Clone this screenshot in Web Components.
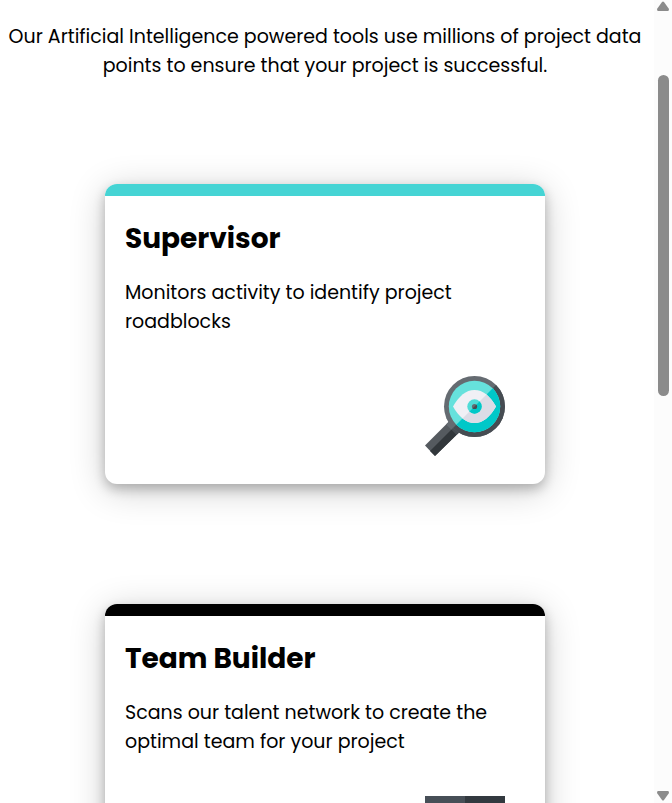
<!DOCTYPE html>
<html lang="en">
<head>
<meta charset="utf-8">
<meta name="viewport" content="width=device-width, initial-scale=1">
<title>Project tools</title>
<style>
  html, body { margin: 0; height: 100%; }
  body { background: #fff; color: #000; font-family: Poppins, Inter, "Noto Sans", sans-serif; font-size: 19px; line-height: 29px; font-weight: 400; }
</style>
</head>
<body>
<page-view>
  <page-intro>Our Artificial Intelligence powered tools use millions of project data points to ensure that your project is successful.</page-intro>
  <tool-card style="--accent: #45d4d4">
    <span slot="title">Supervisor</span>
    Monitors activity to identify project roadblocks
    <magnifier-icon slot="icon"></magnifier-icon>
  </tool-card>
  <tool-card style="--accent: #000">
    <span slot="title">Team Builder</span>
    Scans our talent network to create the optimal team for your project
    <team-icon slot="icon"></team-icon>
  </tool-card>
</page-view>
<script>
  function define(name, html) {
    const template = document.createElement('template');
    template.innerHTML = html;
    customElements.define(name, class extends HTMLElement {
      constructor() {
        super();
        this.attachShadow({ mode: 'open' }).append(template.content.cloneNode(true));
      }
    });
  }

  define('page-view', `
    <style>
      :host { display: grid; grid-template-columns: minmax(0, 1fr) 22px; height: 100vh; overflow: hidden; }
      main { display: flex; flex-direction: column; align-items: center; min-height: 0; overflow: hidden; }
    </style>
    <main><slot></slot></main>
    <scroll-rail></scroll-rail>`);

  define('scroll-rail', `
    <style>
      :host { display: flex; flex-direction: column; align-items: center; box-sizing: border-box; margin-left: 4px; padding: 1px 0 2px; background: #fcfcfc; }
      svg { display: block; width: 12px; height: 10px; flex: none; fill: #8b8b8b; }
      .track { flex: 1; width: 11px; display: flex; flex-direction: column; }
      .before { flex: 64; }
      .thumb { flex: 321; border-radius: 6px; background: #8b8b8b; }
      .after { flex: 394; }
    </style>
    <svg viewBox="0 0 12 10"><path d="M5 1Q6 0 7 1L12 8Q12 10 11 10H1Q0 10 0 8Z"/></svg>
    <div class="track"><div class="before"></div><div class="thumb"></div><div class="after"></div></div>
    <svg viewBox="0 0 12 10"><path d="M5 9Q6 10 7 9L12 2Q12 0 11 0H1Q0 0 0 2Z"/></svg>`);

  define('page-intro', `
    <style>
      :host { display: block; flex: none; padding: 22px 8px 44px; text-align: center; }
      p { margin: 0; }
    </style>
    <p><slot></slot></p>`);

  define('tool-card', `
    <style>
      :host { display: block; flex: none; box-sizing: border-box; width: calc(100% - 40px); max-width: 440px; margin: 60px 0; border-radius: 12px; background: #fff; box-shadow: 0 5px 12px rgba(0,0,0,.24), 0 6px 36px rgba(0,0,0,.2); }
      article { display: flex; flex-direction: column; border-radius: 12px; overflow: hidden; }
      .bar { height: 12px; background: var(--accent); }
      .body { display: flex; flex-direction: column; padding: 21px 20px 28px; }
      h2 { margin: 0 0 17px; font-size: 28px; line-height: 44px; font-weight: 700; }
      p { margin: 0; }
      .icon { align-self: flex-end; margin: 40px 20px 0 0; }
    </style>
    <article>
      <div class="bar"></div>
      <div class="body">
        <h2><slot name="title"></slot></h2>
        <p><slot></slot></p>
        <div class="icon"><slot name="icon"></slot></div>
      </div>
    </article>`);

  define('magnifier-icon', `
    <style>:host, svg { display: block; width: 80px; height: 80px; }</style>
    <svg viewBox="0 0 80 80" aria-hidden="true">
      <defs><clipPath id="lower"><path d="M0 80L80 0V80Z"/></clipPath></defs>
      <path d="M0 69.500L24 45.500 34.500 56 10 80Z" fill="#555a5f"/>
      <path d="M5 75L29 51 34.500 56 10 80Z" fill="#32373b"/>
      <path d="M21 48.500L26 43.500 31.300 48.700 26.500 53.700Z" fill="#656b71"/>
      <path d="M26.500 53.700L31.300 48.700 36.500 54 31.500 59Z" fill="#464c52"/>
      <circle cx="49.500" cy="30.500" r="30.500" fill="#656b71"/>
      <circle cx="49.500" cy="30.500" r="30.500" fill="#464c52" clip-path="url(#lower)"/>
      <circle cx="49.500" cy="30.500" r="25.700" fill="#66e1dc"/>
      <circle cx="49.500" cy="30.500" r="25.700" fill="#00c8c8" clip-path="url(#lower)"/>
      <path d="M28 30.500C34 20 41 14 49.500 14S65 20 71 30.500C65 41 58 47 49.500 47S34 41 28 30.500Z" fill="#f0f0f5"/>
      <path d="M28 30.500C34 20 41 14 49.500 14S65 20 71 30.500C65 41 58 47 49.500 47S34 41 28 30.500Z" fill="#dcdce6" clip-path="url(#lower)"/>
      <circle cx="49.500" cy="30.500" r="7.200" fill="#4fdcd7"/>
      <circle cx="49.500" cy="30.500" r="7.200" fill="#00c8c8" clip-path="url(#lower)"/>
      <circle cx="49.500" cy="30.500" r="2.600" fill="#656b71"/>
      <circle cx="49.500" cy="30.500" r="2.600" fill="#464c52" clip-path="url(#lower)"/>
    </svg>`);

  define('team-icon', `
    <style>:host, svg { display: block; width: 80px; height: 80px; }</style>
    <svg viewBox="0 0 80 80" aria-hidden="true">
      <path d="M0 0H40V80H0Z" fill="#474f57"/>
      <path d="M40 0H80V80H40Z" fill="#32393f"/>
    </svg>`);
</script>
</body>
</html>
